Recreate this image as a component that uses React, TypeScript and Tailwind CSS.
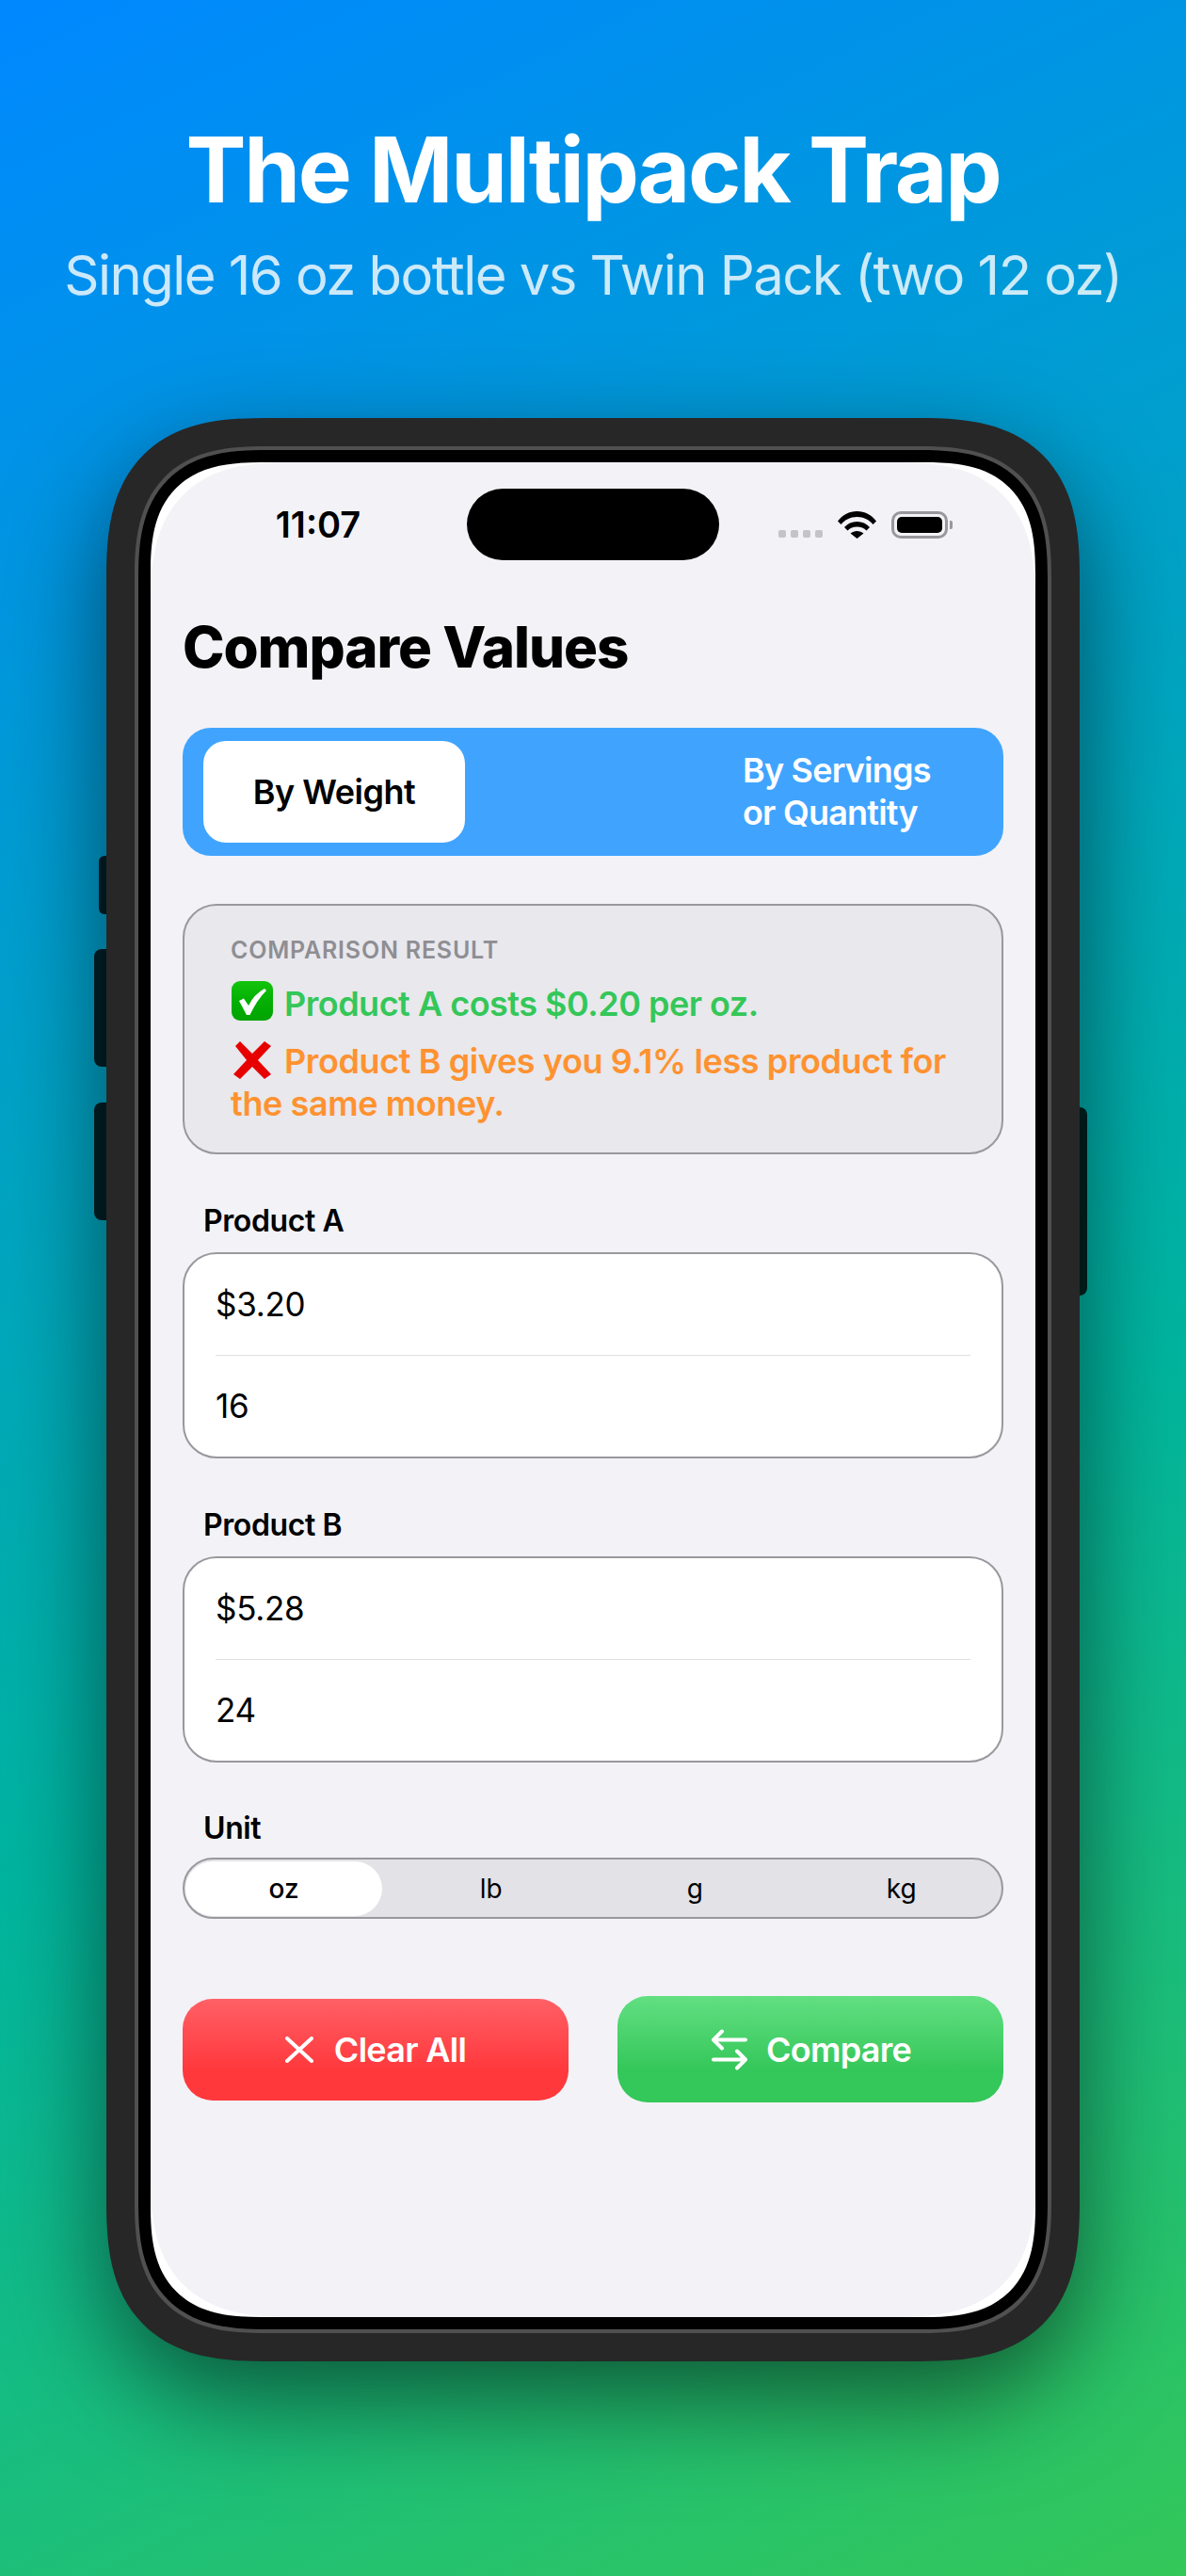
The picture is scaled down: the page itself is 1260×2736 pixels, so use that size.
import React from "react";

const font = { fontFamily: "Inter, 'Noto Sans', sans-serif" };

const CheckEmoji = () => (
  <svg width="46" height="44" viewBox="0 0 44 44" className="inline-block align-[-7px] mr-[11px]">
    <defs>
      <linearGradient id="chk" x1="0" y1="0" x2="0" y2="1">
        <stop offset="0" stopColor="#12c40c" />
        <stop offset="0.5" stopColor="#04b004" />
        <stop offset="1" stopColor="#02a302" />
      </linearGradient>
    </defs>
    <rect x="0" y="0" width="44" height="42" rx="9" fill="url(#chk)" />
    <path d="M8 21 L13 18.5 L18 26 Q24 14 35 8 L37 10 Q27 20 19.5 36 L16 36 Z" fill="#fff" />
  </svg>
);

const CrossEmoji = () => (
  <svg width="46" height="42" viewBox="0 0 44 42" className="inline-block align-[-7px] mr-[11px]">
    <path d="M4 6 L9 1 L22 14 L35 1 L42 6 L28 21 L42 36 L35 41 L22 28 L9 41 L2 36 L16 21 Z" fill="#e60000" />
  </svg>
);

const CloseIcon = () => (
  <svg width="30" height="28" viewBox="0 0 30 28" fill="none" stroke="#fff" strokeWidth="4" strokeLinecap="round">
    <path d="M2 2L28 26M28 2L2 26" />
  </svg>
);

const SwapIcon = () => (
  <svg width="38" height="46" viewBox="1 0 38 46" fill="none" stroke="#fff" strokeWidth="4" strokeLinecap="round" strokeLinejoin="round">
    <path d="M37 12.5H3M3 12.5L12 3.5M3 12.5L12 21.5" />
    <path d="M3 33.5H37M37 33.5L28 24.5M37 33.5L28 42.5" />
  </svg>
);

const ProductCard = ({ label, price, amount }: { label: string; price: string; amount: string }) => (
  <div>
    <div className="h-[40px] pl-[22px] text-[32px] leading-[40px] font-semibold tracking-[-0.4px] text-black">{label}</div>
    <div className="mt-[13px] bg-white border-2 border-[#98989d] rounded-[36px] px-[33px] text-[35px] tracking-[-0.3px] text-black">
      <div className="h-[108px] flex items-center border-b border-[#e0e0e4]">{price}</div>
      <div className="h-[107px] flex items-center">{amount}</div>
    </div>
  </div>
);

const App = () => {
  return (
    <div
      className="w-[1260px] h-[2736px] overflow-hidden bg-[linear-gradient(155deg,#0088ff_0%,#00b5a0_60%,#34c759_100%)]"
      style={font}
    >
      <div className="pt-[124px] text-center">
        <h1 className="text-[96px] leading-[112px] font-bold text-white tracking-[-2.3px]">The Multipack Trap</h1>
        <p className="mt-[21px] text-[58px] leading-[70px] font-normal text-white/80 tracking-[-1.55px]">
          Single 16 oz bottle vs Twin Pack (two 12 oz)
        </p>
      </div>

      <div className="relative mx-auto mt-[117px] w-[1034px] h-[2064px]">
        {/* side buttons */}
        <div className="absolute left-[-8px] top-[465px] w-[12px] h-[62px] rounded-l-[6px] bg-black/80" />
        <div className="absolute left-[-13px] top-[564px] w-[16px] h-[125px] rounded-l-[8px] bg-black/80" />
        <div className="absolute left-[-13px] top-[727px] w-[16px] h-[125px] rounded-l-[8px] bg-black/80" />
        <div className="absolute right-[-8px] top-[732px] w-[12px] h-[200px] rounded-r-[8px] bg-black/80" />

        <div className="relative h-full rounded-[170px] [corner-shape:superellipse(1.4)] bg-[#272727] p-[30px] shadow-[0_40px_110px_rgba(0,0,0,0.55)]">
          <div className="h-full rounded-[140px] [corner-shape:superellipse(1.4)] bg-[#505050] p-[4px]">
            <div className="h-full rounded-[136px] [corner-shape:superellipse(1.4)] bg-black p-[13px]">
              <div className="h-full rounded-[118px] [corner-shape:superellipse(1.4)] bg-white overflow-hidden">
                <div className="h-full rounded-[150px] [corner-shape:superellipse(1.4)] bg-[#f2f2f7]">
                  {/* status bar */}
                  <div className="flex items-center pt-[28px] h-[104px]">
                    <div className="w-[336px] pl-[20px] text-center text-[38px] leading-[44px] font-semibold text-black">11:07</div>
                    <div className="w-[268px] h-[76px] rounded-[38px] bg-black" />
                    <div className="flex items-center pl-[63px]">
                      <div className="flex items-center gap-[5px] mt-[20px]">
                        <span className="w-[8px] h-[8px] rounded-[2px] bg-[#c4c4c8]" />
                        <span className="w-[8px] h-[8px] rounded-[2px] bg-[#c4c4c8]" />
                        <span className="w-[8px] h-[8px] rounded-[2px] bg-[#c4c4c8]" />
                        <span className="w-[8px] h-[8px] rounded-[2px] bg-[#c4c4c8]" />
                      </div>
                      <svg width="41" height="29" viewBox="0 0 41 29" className="ml-[16px]">
                        <path d="M0 10.5C5 4 12.5 0 20.5 0S36 4 41 10.5L37.5 14C33.5 9 27.5 6 20.5 6S7.5 9 3.5 14Z" fill="#000" />
                        <path d="M7 17C10.5 13 15 11 20.5 11S30.5 13 34 17L30.5 20.5C28 18 24.5 16.5 20.5 16.5S13 18 10.5 20.5Z" fill="#000" />
                        <path d="M13.5 23.5C15.5 22 18 21 20.5 21S25.5 22 27.5 23.5L20.5 29Z" fill="#000" />
                      </svg>
                      <div className="ml-[16px] flex items-center">
                        <div className="w-[60px] h-[29px] rounded-[10px] border-[3px] border-[#98989c] p-[3px]">
                          <div className="h-full rounded-[5px] bg-black" />
                        </div>
                        <div className="ml-[2px] w-[3px] h-[9px] rounded-r-[2px] bg-[#98989c]" />
                      </div>
                    </div>
                  </div>

                  <div className="px-[34px]">
                    <h2 className="mt-[57px] text-[60px] leading-[70px] font-extrabold text-black tracking-[-1px]">Compare Values</h2>

                    {/* mode segment */}
                    <div className="mt-[51px] h-[136px] rounded-[30px] bg-[#40a4ff] flex items-center pl-[22px]">
                      <div className="w-[278px] h-[108px] rounded-[24px] bg-white flex items-center justify-center text-[36px] font-semibold tracking-[-0.5px] text-black">
                        By Weight
                      </div>
                      <div className="ml-[295px] text-[36px] leading-[45px] font-semibold tracking-[-0.8px] text-white">
                        By Servings
                        <br />
                        or Quantity
                      </div>
                    </div>

                    {/* result */}
                    <div className="mt-[51px] h-[266px] rounded-[36px] border-2 border-[#98989d] bg-[#e8e8ed] px-[49px] pt-[32px]">
                      <div className="text-[25px] leading-[30px] font-semibold text-[#8e8e93] tracking-[0.8px]">COMPARISON RESULT</div>
                      <div className="mt-[18px] text-[36px] leading-[45px] font-semibold tracking-[-0.5px] text-[#34c759]">
                        <CheckEmoji />
                        Product A costs $0.20 per oz.
                      </div>
                      <div className="mt-[16px] text-[36px] leading-[45px] font-semibold tracking-[-0.4px] text-[#ff9230]">
                        <CrossEmoji />
                        Product B gives you 9.1% less product for the same money.
                      </div>
                    </div>

                    <div className="mt-[51px]">
                      <ProductCard label="Product A" price="$3.20" amount="16" />
                    </div>
                    <div className="mt-[51px]">
                      <ProductCard label="Product B" price="$5.28" amount="24" />
                    </div>

                    {/* unit segment */}
                    <div className="mt-[50px] h-[40px] pl-[22px] text-[32px] leading-[40px] font-semibold tracking-[-0.4px] text-black">Unit</div>
                    <div className="mt-[11px] h-[65px] rounded-full border-2 border-[#98989d] bg-[#e2e2e7] grid grid-cols-4 items-center px-[1px] text-[28px] text-black">
                      <div className="h-[58px] w-[209px] rounded-full bg-white flex items-center justify-center font-medium">oz</div>
                      <div className="text-center">lb</div>
                      <div className="text-center">g</div>
                      <div className="text-center pl-[6px]">kg</div>
                    </div>

                    {/* actions */}
                    <div className="mt-[82px] flex items-center justify-between">
                      <div className="w-[410px] h-[108px] rounded-[32px] bg-[linear-gradient(180deg,#ff6066_0%,#ff383c_70%)] flex items-center justify-center gap-[22px] text-[36px] font-semibold tracking-[-0.7px] text-white">
                        <CloseIcon />
                        Clear All
                      </div>
                      <div className="w-[410px] h-[113px] rounded-[32px] bg-[linear-gradient(180deg,#62df82_0%,#34c759_70%)] flex items-center justify-center gap-[20px] pl-[2px] text-[36px] font-semibold tracking-[-0.7px] text-white">
                        <SwapIcon />
                        Compare
                      </div>
                    </div>
                  </div>
                </div>
              </div>
            </div>
          </div>
        </div>
      </div>
    </div>
  );
};

export default App;
